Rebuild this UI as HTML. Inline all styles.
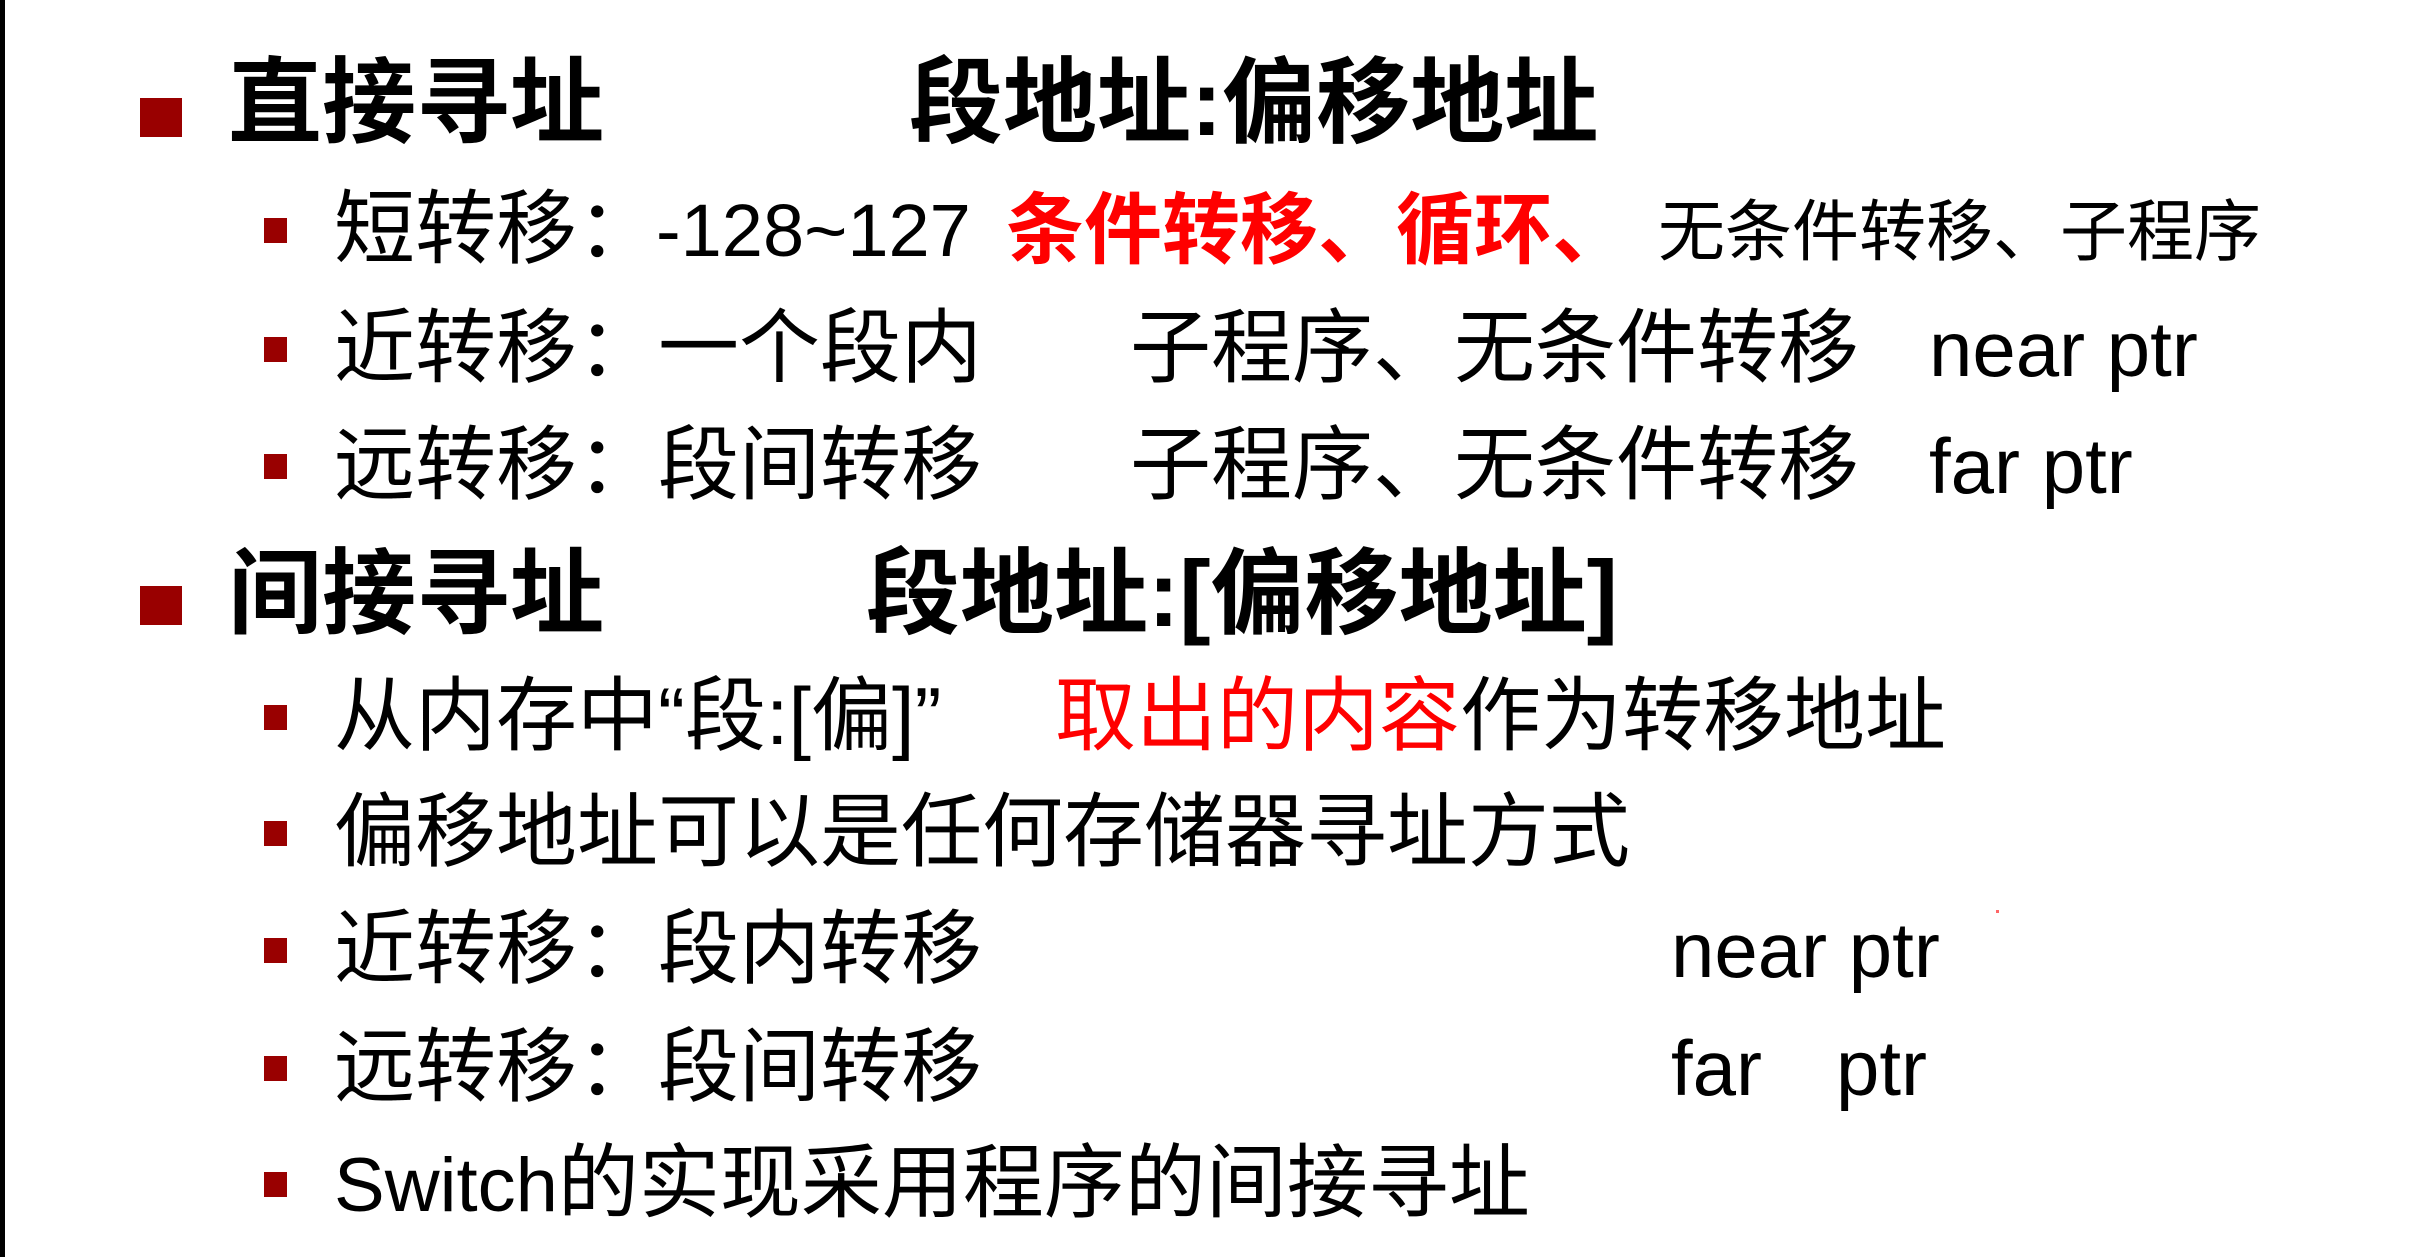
<!DOCTYPE html>
<html><head><meta charset="utf-8"><style>
html,body{margin:0;padding:0;}
body{width:2433px;height:1257px;position:relative;background:#fff;overflow:hidden;font-family:"Liberation Sans","Noto Sans CJK SC",sans-serif;color:#000;}
.bl{position:absolute;left:0;top:0;width:5px;height:1257px;background:#000;}
.t{position:absolute;white-space:nowrap;line-height:1;}
.b{font-weight:bold;font-size:94px;}
.n{font-size:81px;}
.r{color:#f00;}
.sq{position:absolute;background:#990000;}
.big{left:140px;width:42px;height:39px;}
.sm{left:264px;width:23px;height:25px;}
</style></head><body>
<div class="bl"></div>

<div class="sq big" style="top:98px"></div>
<div class="t b" style="left:228px;top:56px">直接寻址</div>
<div class="t b" style="left:909px;top:56px">段地址:偏移地址</div>

<div class="sq sm" style="top:218px"></div>
<div class="t n" style="left:334px;top:190px">短转移：</div>
<div class="t n" style="left:656px;top:194px;font-size:74px">-128~127</div>
<div class="t n r" style="left:1006px;top:191px;font-weight:bold;font-size:78px">条件转移、循环、</div>
<div class="t" style="left:1658px;top:199px;font-size:67px">无条件转移、子程序</div>

<div class="sq sm" style="top:337px"></div>
<div class="t n" style="left:334px;top:309px">近转移：一个段内</div>
<div class="t n" style="left:1130px;top:309px">子程序、无条件转移</div>
<div class="t n" style="left:1929px;top:310px;font-size:78px">near ptr</div>

<div class="sq sm" style="top:454px"></div>
<div class="t n" style="left:334px;top:426px">远转移：段间转移</div>
<div class="t n" style="left:1130px;top:426px">子程序、无条件转移</div>
<div class="t n" style="left:1929px;top:427px;font-size:78px">far ptr</div>

<div class="sq big" style="top:586px"></div>
<div class="t b" style="left:228px;top:547px">间接寻址</div>
<div class="t b" style="left:866px;top:547px">段地址:[偏移地址]</div>

<div class="sq sm" style="top:705px"></div>
<div class="t n" style="left:334px;top:677px">从内存中“段:[偏]”</div>
<div class="t n" style="left:1055px;top:677px"><span class="r">取出的内容</span>作为转移地址</div>

<div class="sq sm" style="top:821px"></div>
<div class="t n" style="left:334px;top:793px">偏移地址可以是任何存储器寻址方式</div>

<div class="sq sm" style="top:938px"></div>
<div class="t n" style="left:334px;top:910px">近转移：段内转移</div>
<div class="t n" style="left:1671px;top:911px;font-size:78px">near ptr</div>
<div style="position:absolute;left:1996px;top:910px;width:3px;height:3px;background:#f66;"></div>

<div class="sq sm" style="top:1056px"></div>
<div class="t n" style="left:334px;top:1028px">远转移：段间转移</div>
<div class="t n" style="left:1671px;top:1029px;font-size:78px">far</div>
<div class="t n" style="left:1836px;top:1029px;font-size:78px">ptr</div>

<div class="sq sm" style="top:1172px"></div>
<div class="t n" style="left:334px;top:1144px"><span style="font-size:76px">Switch</span>的实现采用程序的间接寻址</div>
</body></html>
